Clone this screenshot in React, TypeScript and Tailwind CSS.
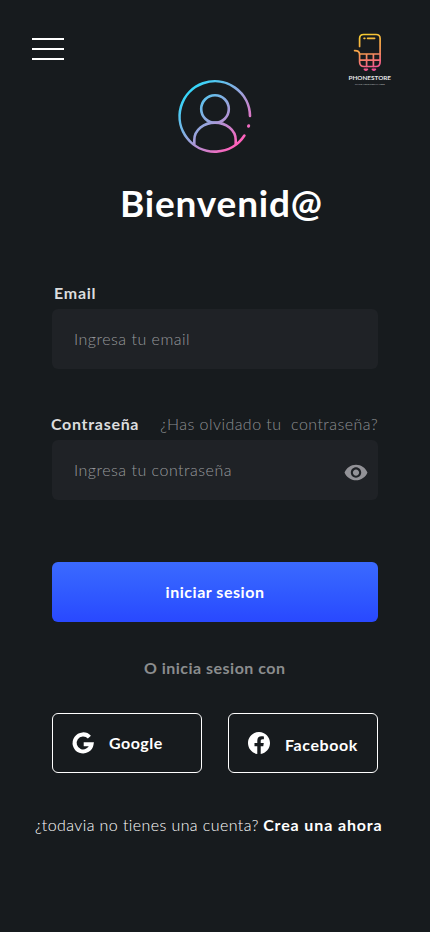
import React from "react";
import { BsFacebook } from "react-icons/bs";
import { MdVisibility } from "react-icons/md";

function StoreLogo() {
  return (
    <svg className="h-[60px] w-[54px]" viewBox="0 0 54 60" fill="none">
      <defs>
        <linearGradient id="store" x1="18" y1="5" x2="30" y2="44" gradientUnits="userSpaceOnUse">
          <stop stopColor="#f7d32c" />
          <stop offset="0.5" stopColor="#f79a50" />
          <stop offset="1" stopColor="#f0479c" />
        </linearGradient>
      </defs>
      <g transform="translate(-1.4 0)" stroke="url(#store)" strokeWidth="1.7" strokeLinecap="round" strokeLinejoin="round">
        <path d="M18 18.500V10.500Q18 6.500 22 6.500H34.500Q38.500 6.500 38.500 10.500V34Q38.500 38.500 34.500 38.500H22.500Q18 38.500 18 34V26.500Q18 22.500 13 22.600" />
        <path d="M18 26H38.500M18.500 32.200H38.500M25 26V38.300M31.800 26V38.300M22.500 10.300H23.200M26 10.300H33" />
        <path d="M22.800 41.300Q24.300 43.200 25.800 41.300ZM30.800 41.300Q32.300 43.200 33.800 41.300Z" fill="url(#store)" />
      </g>
      <text x="5.500" y="52.400" fill="#e2e3e4" fontFamily="Lato, sans-serif" fontSize="6" fontWeight="700" textLength="42.500" lengthAdjust="spacingAndGlyphs">PHONESTORE</text>
      <text x="12" y="57" fill="#a2a6aa" fontFamily="Lato, sans-serif" fontSize="2.400" fontWeight="700" textLength="30" lengthAdjust="spacingAndGlyphs">PLACE YOUR LOGAN HERE</text>
    </svg>
  );
}

function Avatar() {
  return (
    <svg className="h-[76px] w-[76px]" viewBox="0 0 76 76" fill="none">
      <defs>
        <linearGradient id="avatar" x1="12" y1="12" x2="61" y2="65" gradientUnits="userSpaceOnUse">
          <stop stopColor="#32d8fa" />
          <stop offset="0.5" stopColor="#96a5dd" />
          <stop offset="1" stopColor="#ff61bb" />
        </linearGradient>
      </defs>
      <g stroke="url(#avatar)" strokeWidth="2.6" strokeLinecap="round">
        <path d="M73 38A35.200 35.200 0 1 0 67.400 57.500" />
        <circle cx="38" cy="31" r="13.800" />
        <path d="M17.300 66V62C17.300 52 27 44.600 38 44.600S58.700 52 58.700 62V66" />
        <path d="M71.700 47.700L71.500 48.300" strokeWidth="3" />
      </g>
    </svg>
  );
}

function GoogleMark() {
  return (
    <svg className="h-6 w-6" viewBox="0 0 24 24" fill="none">
      <path d="M18.400 6.200A8.500 8.500 0 1 0 20.500 13.300H12.700" stroke="white" strokeWidth="4.100" />
    </svg>
  );
}

export default function App() {
  return (
    <main className="flex h-[932px] w-[430px] flex-col overflow-hidden bg-[#171b1e] font-['Lato',sans-serif] text-base leading-5 text-white">
      <header className="flex h-[78px] shrink-0 items-start justify-between pr-[33px] pl-8">
        <button aria-label="Menú" className="mt-[38px] flex w-8 flex-col gap-2">
          <span className="h-0.5 w-full bg-white" />
          <span className="h-0.5 w-full bg-white" />
          <span className="h-0.5 w-full bg-white" />
        </button>
        <div className="mt-[28px]"><StoreLogo /></div>
      </header>

      <div className="flex h-[76px] shrink-0 pl-[177px]"><Avatar /></div>
      <h1 className="mt-[25px] h-[48px] shrink-0 pl-[120px] text-[37px] leading-[48px] font-bold tracking-[0.8px] whitespace-nowrap">Bienvenid@</h1>

      <form className="mt-14 flex w-[326px] shrink-0 flex-col self-center">
        <label className="pl-0.5 font-bold tracking-[0.75px] text-[#dcddde]"><span>Email</span></label>
        <div className="mt-1.5 flex h-[60px] items-center rounded-md bg-[#1f2226] pl-[22px] font-light tracking-[0.5px] text-[#97999c]">
          <span>Ingresa tu email</span>
        </div>
        <div className="mt-[45px] -ml-px flex h-5 items-center justify-between whitespace-pre">
          <label className="font-bold tracking-[0.7px] text-[#dcddde]"><span>Contraseña</span></label>
          <a className="font-light tracking-[0.45px] text-[#8d8f92]">¿Has olvidado tu  contraseña?</a>
        </div>
        <div className="mt-1.5 flex h-[60px] items-center justify-between rounded-md bg-[#1f2226] pr-[9px] pl-[22px] font-light text-[#97999c]">
          <span className="tracking-[0.5px]">Ingresa tu contraseña</span>
          <MdVisibility className="mt-1 h-[25px] w-[26px] text-[#929297]" />
        </div>
        <button type="button" className="mt-[62px] flex h-[60px] items-center justify-center rounded-md bg-linear-to-b from-[#3b6aff] to-[#2948ff] font-bold tracking-[0.53px]">
          <span>iniciar sesion</span>
        </button>
      </form>

      <p className="mt-9 shrink-0 pl-36 font-bold tracking-[0.48px] text-[#8b8d8e]"><span>O inicia sesion con</span></p>
      <div className="mt-[35px] flex w-[326px] shrink-0 justify-between self-center">
        <button className="flex h-[60px] w-[150px] items-center rounded-md border border-white pl-[18px] font-bold">
          <GoogleMark />
          <span className="ml-3.5 tracking-[0.5px]">Google</span>
        </button>
        <button className="flex h-[60px] w-[150px] items-center rounded-md border border-white pl-[19px] font-bold">
          <BsFacebook className="h-[22px] w-[22px]" />
          <span className="mt-1 ml-[15px] tracking-[0.6px]">Facebook</span>
        </button>
      </div>
      <p className="mt-[42px] shrink-0 pl-[35px] font-light whitespace-nowrap">
        <span className="tracking-[0.41px]">¿todavia no tienes una cuenta?</span> <b className="font-bold tracking-[0.87px]">Crea una ahora</b>
      </p>
    </main>
  );
}
